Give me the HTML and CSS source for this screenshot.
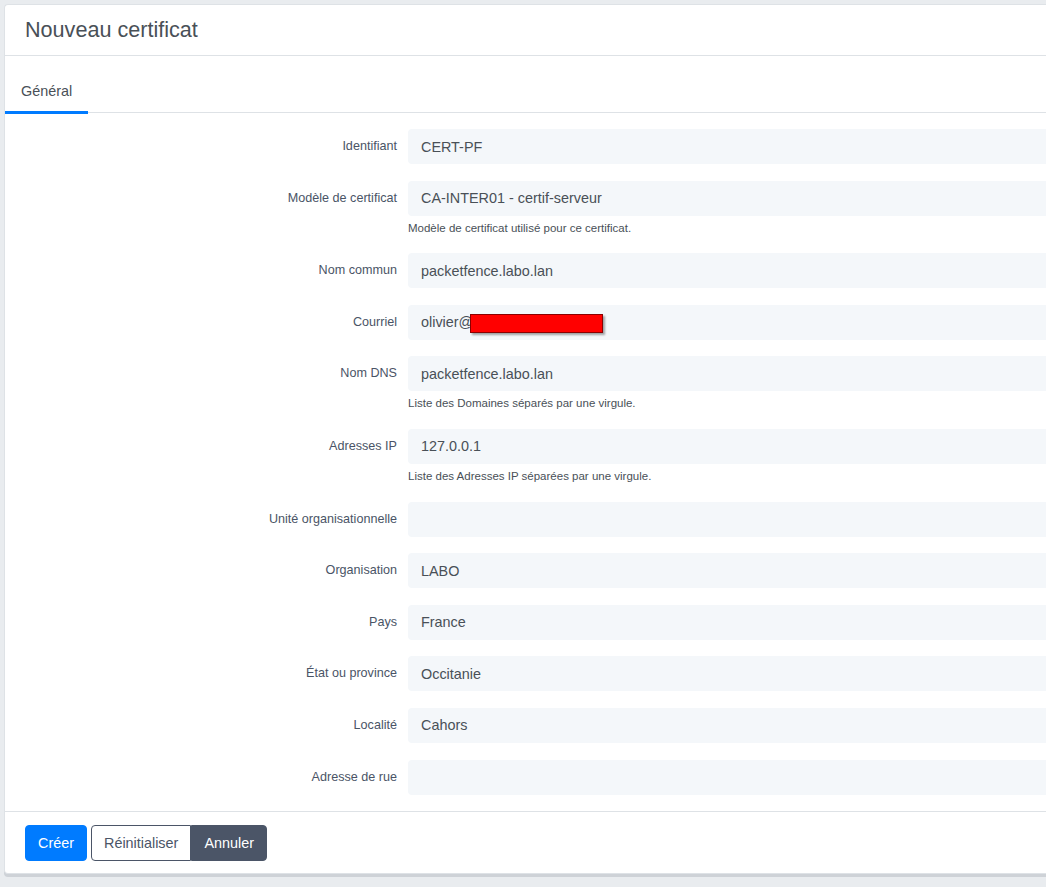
FILE: index.html
```html
<!DOCTYPE html>
<html lang="fr">
  <head>
    <meta charset="UTF-8" />
    <meta name="viewport" content="width=device-width, initial-scale=1.0" />
    <title>Nouveau certificat</title>
    <link rel="stylesheet" href="styles.css">
  </head>
  <body>
    <div class="card">
      <div class="card-header">
        <h1 class="title">Nouveau certificat</h1>
      </div>

      <div class="tabs">
        <a class="tab active" href="#">Général</a>
      </div>

      <form class="card-body" id="certForm">
        <div class="form-group">
          <label for="id">Identifiant</label>
          <div class="field">
            <input type="text" id="id" value="CERT-PF" />
          </div>
        </div>

        <div class="form-group">
          <label for="profile">Modèle de certificat</label>
          <div class="field">
            <input type="text" id="profile" value="CA-INTER01 - certif-serveur" />
            <div class="help">Modèle de certificat utilisé pour ce certificat.</div>
          </div>
        </div>

        <div class="form-group">
          <label for="cn">Nom commun</label>
          <div class="field">
            <input type="text" id="cn" value="packetfence.labo.lan" />
          </div>
        </div>

        <div class="form-group">
          <label for="mail">Courriel</label>
          <div class="field">
            <input type="text" id="mail" value="olivier@" />
            <span class="redact"></span>
          </div>
        </div>

        <div class="form-group">
          <label for="dns">Nom DNS</label>
          <div class="field">
            <input type="text" id="dns" value="packetfence.labo.lan" />
            <div class="help">Liste des Domaines séparés par une virgule.</div>
          </div>
        </div>

        <div class="form-group">
          <label for="ip">Adresses IP</label>
          <div class="field">
            <input type="text" id="ip" value="127.0.0.1" />
            <div class="help">Liste des Adresses IP séparées par une virgule.</div>
          </div>
        </div>

        <div class="form-group">
          <label for="ou">Unité organisationnelle</label>
          <div class="field">
            <input type="text" id="ou" value="" />
          </div>
        </div>

        <div class="form-group">
          <label for="org">Organisation</label>
          <div class="field">
            <input type="text" id="org" value="LABO" />
          </div>
        </div>

        <div class="form-group">
          <label for="country">Pays</label>
          <div class="field">
            <input type="text" id="country" value="France" />
          </div>
        </div>

        <div class="form-group">
          <label for="state">État ou province</label>
          <div class="field">
            <input type="text" id="state" value="Occitanie" />
          </div>
        </div>

        <div class="form-group">
          <label for="locality">Localité</label>
          <div class="field">
            <input type="text" id="locality" value="Cahors" />
          </div>
        </div>

        <div class="form-group">
          <label for="street">Adresse de rue</label>
          <div class="field">
            <input type="text" id="street" value="" />
          </div>
        </div>
      </form>

      <div class="card-footer">
        <button type="submit" form="certForm" class="btn btn-primary">Créer</button>
        <div class="btn-group">
          <button type="reset" form="certForm" class="btn btn-outline">Réinitialiser</button>
          <button type="button" class="btn btn-dark">Annuler</button>
        </div>
      </div>
    </div>
  </body>
</html>
```

FILE: styles.css
```css
html {
  overflow: hidden;
}

body {
  margin: 0;
  padding: 4px;
  background-color: #e9ecef;
  font-family: "Liberation Sans", Arial, sans-serif;
  color: #495057;
}

.card {
  width: calc(100vw + 40px);
  background-color: #fff;
  border: 1px solid #dee2e6;
  border-right: none;
  border-radius: 4px 0 0 4px;
  box-shadow: 0 3px 0 #ced2d7;
}

.card-header {
  padding: 12px 20px;
  border-bottom: 1px solid #dee2e6;
}

.title {
  margin: 0;
  font-size: 21.6px;
  font-weight: normal;
  line-height: 26px;
  color: #495057;
}

.tabs {
  display: flex;
  padding-top: 17px;
  border-bottom: 1px solid #dee2e6;
}

.tab {
  display: block;
  padding: 7px 16px 9px;
  font-size: 14.4px;
  line-height: 22px;
  color: #495057;
  text-decoration: none;
  border-bottom: 3px solid transparent;
  margin-bottom: -2px;
}

.tab.active {
  border-bottom-color: #007bff;
}

.card-body {
  padding: 16px 0 0;
}

.form-group {
  display: grid;
  grid-template-columns: 392px 1fr;
  column-gap: 11px;
  margin-bottom: 16.6px;
}

.form-group label {
  text-align: right;
  font-size: 12.6px;
  line-height: 35px;
  color: #4a5466;
}

.field {
  position: relative;
}

.field input {
  display: block;
  width: 100%;
  height: 35px;
  padding: 0 12px;
  border: 1px solid transparent;
  border-radius: 4px;
  background-color: #f4f7fa;
  font-family: inherit;
  font-size: 14.4px;
  color: #495057;
  box-sizing: border-box;
}

.field input:focus {
  outline: none;
  border-color: #80bdff;
}

.help {
  margin-top: 4px;
  font-size: 11.5px;
  line-height: 17px;
  color: #495057;
}

/* masked e-mail */
.redact {
  position: absolute;
  left: 62px;
  top: 9px;
  width: 131px;
  height: 17px;
  background-color: #ff0000;
  border: 1px solid #8b0000;
  box-shadow: 2px 2px 2px rgba(0, 0, 0, 0.35);
}

.card-footer {
  display: flex;
  gap: 4px;
  padding: 13px 20px 12px;
  border-top: 1px solid #dee2e6;
}

.btn-group {
  display: flex;
}

.btn {
  height: 36px;
  padding: 0 12px;
  border: 1px solid transparent;
  border-radius: 4px;
  font-family: inherit;
  font-size: 14.4px;
  cursor: pointer;
}

.btn-primary {
  background-color: #007bff;
  border-color: #007bff;
  color: #fff;
}

.btn-outline {
  background-color: #fff;
  border-color: #4b5567;
  color: #4b5567;
  border-radius: 4px 0 0 4px;
}

.btn-dark {
  background-color: #4b5567;
  border-color: #4b5567;
  color: #fff;
  border-radius: 0 4px 4px 0;
}
```
